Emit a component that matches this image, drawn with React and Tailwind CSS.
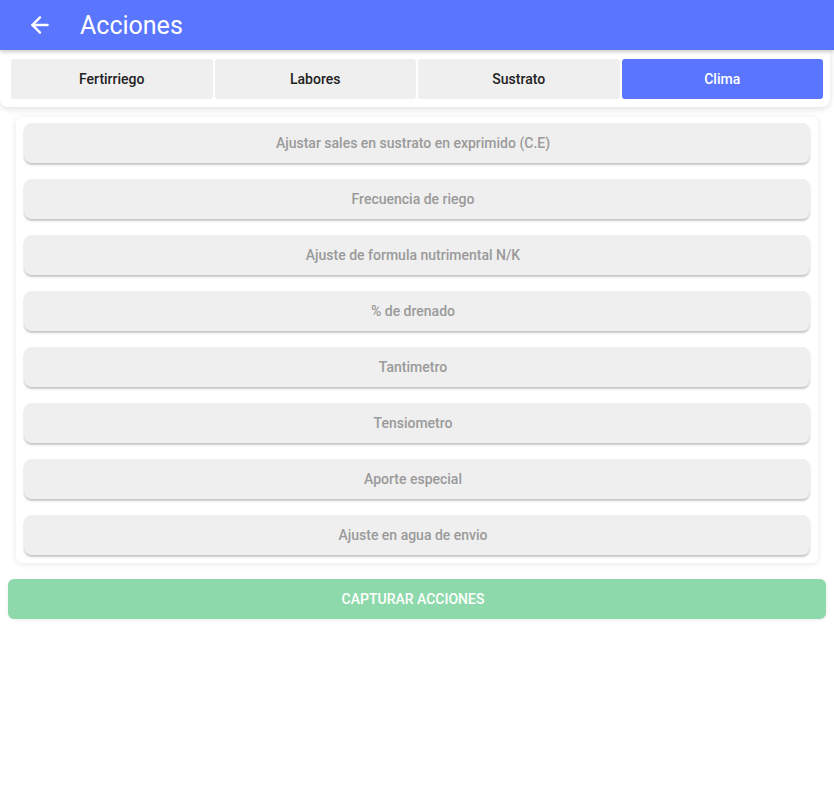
import { ArrowLeft } from 'lucide-react';

const tabs = ['Fertirriego', 'Labores', 'Sustrato', 'Clima'];

const actions = [
  'Ajustar sales en sustrato en exprimido (C.E)',
  'Frecuencia de riego',
  'Ajuste de formula nutrimental N/K',
  '% de drenado',
  'Tantimetro',
  'Tensiometro',
  'Aporte especial',
  'Ajuste en agua de envio',
];

const App = () => {
  const active = 'Clima';

  return (
    <div className="min-h-[800px] bg-white font-['Roboto',sans-serif]">
      <header className="h-[50px] bg-[#5a76fe] flex items-center shadow-[0_2px_4px_rgba(0,0,0,0.2)] relative z-10">
        <ArrowLeft className="ml-[27px] text-white" size={26} strokeWidth={2.2} />
        <h1 className="ml-[27px] text-white text-[25px] leading-none">Acciones</h1>
      </header>

      <div className="mr-[4px] bg-white rounded-b-[8px] shadow-[0_2px_6px_rgba(0,0,0,0.12)] pl-[11px] pr-[7px] pt-[9px] pb-[8px] flex gap-[2px]">
        {tabs.map((tab) => (
          <button
            key={tab}
            className={
              tab === active
                ? 'flex-1 h-[40px] rounded-[3px] bg-[#5a76fe] text-white text-[14px] font-medium'
                : 'flex-1 h-[40px] rounded-[3px] bg-[#efefef] text-[#222] text-[14px] font-medium'
            }
          >
            {tab}
          </button>
        ))}
      </div>

      <div className="mx-[16px] mt-[10px] bg-white rounded-[6px] shadow-[0_1px_6px_rgba(0,0,0,0.1)] px-[8px] pt-[6px] pb-[8px] flex flex-col gap-[16px]">
        {actions.map((action) => (
          <button
            key={action}
            className="h-[40px] w-full pr-[8px] rounded-[8px] bg-[#efefef] text-[#9a9a9a] text-[14px] font-medium shadow-[0_2px_2px_rgba(0,0,0,0.22)]"
          >
            {action}
          </button>
        ))}
      </div>

      <div className="mx-[8px] mt-[16px]">
        <button className="w-full h-[40px] pr-[8px] rounded-[6px] bg-[#8dd9ab] text-white text-[14px] font-medium shadow-[0_1px_4px_rgba(0,0,0,0.08)]">
          CAPTURAR ACCIONES
        </button>
      </div>
    </div>
  );
};

export default App;
